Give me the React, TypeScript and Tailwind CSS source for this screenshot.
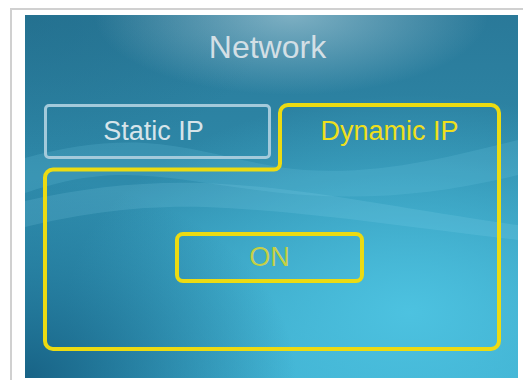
import React from "react";

export default function App() {
  return (
    <div className="w-[523px] h-[380px] bg-white overflow-hidden pt-[8px] pl-[10px] font-['Liberation_Sans',Arial,sans-serif]">
      <div className="border-t-2 border-l-2 border-[#d0d0d0] h-[372px] pt-[5px] pl-[13px]">
        <div className="relative w-[493px] h-[363px] overflow-hidden bg-[#2d88a8] bg-[image:radial-gradient(ellipse_40%_22%_at_54%_0%,rgba(160,198,212,0.7),transparent),radial-gradient(ellipse_55%_55%_at_0%_100%,rgba(22,95,130,0.95),transparent),radial-gradient(ellipse_70%_60%_at_78%_82%,rgba(78,196,226,0.95),transparent),radial-gradient(ellipse_50%_40%_at_0%_0%,rgba(30,105,135,0.5),transparent),linear-gradient(180deg,#2a7999_0%,#2d87a7_40%,#3aa9ca_100%)]">
          <svg className="absolute inset-0" width="493" height="363" viewBox="0 0 493 363">
            <path d="M0,143 C40,132 80,126 120,128 C180,132 220,150 280,155 C360,160 430,140 493,125 L493,160 C420,178 350,185 280,180 C210,175 150,160 100,160 C60,160 30,168 0,178 Z" fill="#7fd6ee" opacity="0.16" />
            <path d="M0,186 C60,172 120,166 180,168 C280,172 380,195 493,210 L493,225 C380,212 280,196 180,192 C110,190 50,200 0,212 Z" fill="#9be6f5" opacity="0.14" />
          </svg>
          <svg className="absolute inset-0" width="493" height="363" viewBox="0 0 493 363" fill="none">
            <path
              d="M20 162.5 A8 8 0 0 1 28 154.5 L249 154.5 A6 6 0 0 0 255 148.5 L255 98 A8 8 0 0 1 263 90 L466 90 A8 8 0 0 1 474 98 L474 326 A8 8 0 0 1 466 334 L28 334 A8 8 0 0 1 20 326 Z"
              stroke="#ecdb12"
              strokeWidth="4"
              strokeLinejoin="round"
            />
          </svg>
          <div className="relative flex flex-col">
            <div className="pt-[16px] pr-[8px] text-center text-[32px] leading-none text-[#d3dfe5]">Network</div>
            <div className="mt-[40px] flex pl-[19px]">
              <div className="mt-[1px] w-[227px] h-[55px] pr-[8px] rounded-[5px] border-[3px] border-[#a3cadb] flex items-center justify-center text-[27px] leading-none text-[#d6e4ea]">
                Static IP
              </div>
              <div className="ml-[7px] w-[223px] h-[57px] flex items-center justify-center text-[27px] leading-none text-[#efdf1c]">
                Dynamic IP
              </div>
            </div>
            <div className="mt-[72px] ml-[150px] w-[189px] h-[51px] rounded-[8px] border-[4px] border-[#ecdb12] flex items-center justify-center text-[27px] leading-none text-[#c6d045]">
              ON
            </div>
          </div>
        </div>
      </div>
    </div>
  );
}
